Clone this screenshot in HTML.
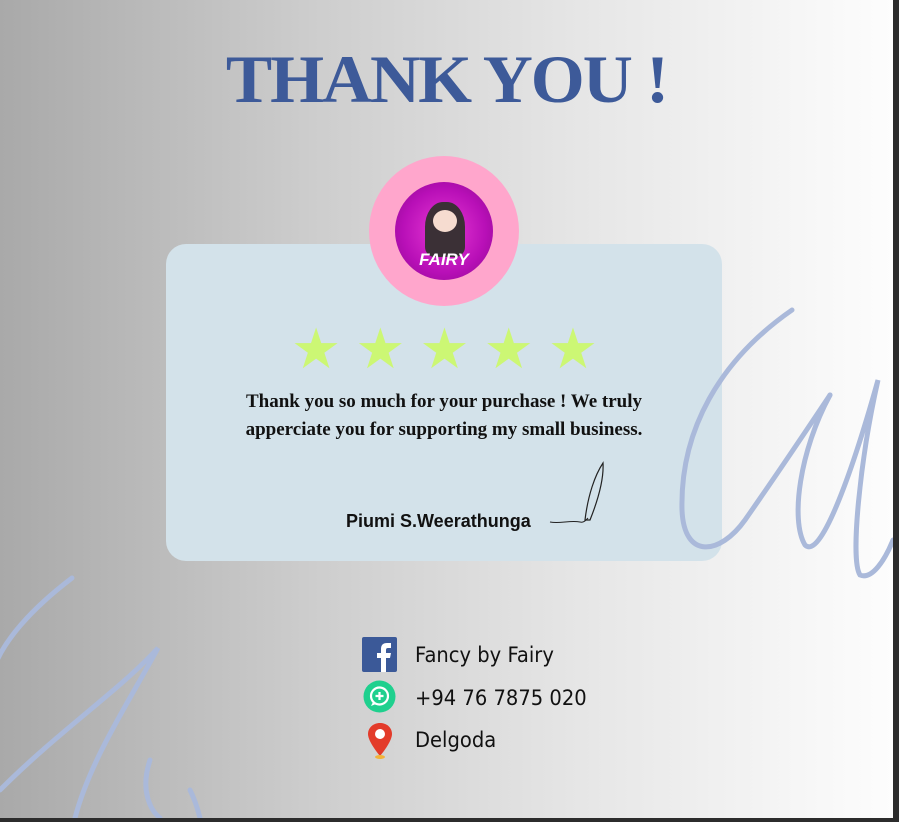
<!DOCTYPE html>
<html><head><meta charset="utf-8"><style>
body{margin:0;width:899px;height:822px;background:#2c2c2c;overflow:hidden;position:relative;font-family:"Liberation Serif",serif}
#pg{position:absolute;left:0;top:0;width:893px;height:818px;background:linear-gradient(90deg,#a9a9a9 0%,#cdcdcd 35%,#e6e6e6 65%,#fdfdfd 100%);overflow:hidden}
h1{position:absolute;left:0;width:893px;top:40px;margin:0;text-align:center;font:bold 68px "Liberation Serif",serif;color:#3d5a99;letter-spacing:-2px;transform:scaleX(1.02)}
.card{position:absolute;left:166px;top:244px;width:556px;height:317px;background:#d3e2ea;border-radius:20px}
.logo{position:absolute;left:369px;top:156px;width:150px;height:150px;border-radius:50%;background:#ffa6cc}
.inner{position:absolute;left:26px;top:26px;width:98px;height:98px;border-radius:50%;background:radial-gradient(circle,#e93ad6 0%,#b80fb7 60%,#8a0a8c 100%);overflow:hidden}
.stars{position:absolute;left:291px;top:322px;font-size:56px;color:#ccf774;letter-spacing:14px;line-height:1}
.msg{position:absolute;left:166px;width:556px;top:388px;text-align:center;font:bold 19px/28px "Liberation Serif",serif;color:#111}
.sig{position:absolute;left:346px;top:511px;font:bold 18px "Liberation Sans",sans-serif;color:#111}
.row{position:absolute;left:415px;font:21px "DejaVu Sans",sans-serif;color:#111;transform-origin:left;transform:scaleX(.93)}
</style></head><body><div id="pg">
<h1>THANK YOU !</h1>
<div class="card"></div>
<svg style="position:absolute;left:0;top:0" width="893" height="818">
<g fill="none" stroke="#aab9da" stroke-width="5" stroke-linecap="round">
<path d="M792 310 C720 360 680 430 682 510 C684 560 720 555 745 520 C780 470 820 410 830 395"/>
<path d="M830 395 C800 450 790 520 805 545 C820 560 850 480 878 380 C860 460 850 560 860 575 C872 580 885 560 893 540"/>
<path d="M72 578 C30 610 5 640 -5 665"/>
<path d="M0 790 C60 730 120 690 158 648 C130 700 90 760 75 818"/>
<path d="M150 760 C140 790 150 810 160 818 M190 790 C195 800 198 810 200 818"/>
</g>
<path d="M603 463 C595 475 588 495 585 520 L590 520 C598 500 604 480 603 463Z" fill="none" stroke="#222" stroke-width="1.2"/>
<path d="M550 522 C560 524 570 520 580 522 C584 523 586 520 588 518" fill="none" stroke="#222" stroke-width="1"/>
</svg>
<div class="logo"><div class="inner">
<div style="position:absolute;left:30px;top:20px;width:40px;height:55px;background:#3b3036;border-radius:45% 45% 10px 10px"></div>
<div style="position:absolute;left:38px;top:28px;width:24px;height:22px;background:#f6dcd0;border-radius:50%"></div>
<div style="position:absolute;left:0;width:98px;top:68px;text-align:center;color:#fff;font:italic bold 17px 'Liberation Sans',sans-serif">FAIRY</div>
</div></div>
<div class="stars">★★★★★</div>
<div class="msg">Thank you so much for your purchase ! We truly<br>apperciate you for supporting my small business.</div>
<div class="sig">Piumi S.Weerathunga</div>
<svg style="position:absolute;left:362px;top:637px" width="35" height="35"><rect width="35" height="35" rx="2" fill="#3b5998"/><path d="M19 35V21h-4v-5h4v-4c0-4 2-6 6-6h4v5h-3c-1.5 0-2 .7-2 2v3h5l-1 5h-4v14z" fill="#fff"/></svg>
<svg style="position:absolute;left:363px;top:680px" width="33" height="33"><circle cx="16.5" cy="16.5" r="16" fill="#1fd08e"/><circle cx="16.5" cy="16" r="8.5" fill="none" stroke="#fff" stroke-width="2.2"/><path d="M10 22l-2 4 5-2" fill="#fff"/><path d="M16.5 12v8M12.5 16h8" stroke="#fff" stroke-width="2.2"/></svg>
<svg style="position:absolute;left:367px;top:722px" width="26" height="38"><path d="M13 1C6 1 1 6 1 12c0 8 12 22 12 22s12-14 12-22C25 6 20 1 13 1z" fill="#e33b2a"/><circle cx="13" cy="12" r="5" fill="#fff"/><ellipse cx="13" cy="35" rx="5" ry="2" fill="#f2b33a"/></svg>
<div class="row" style="top:643px">Fancy by Fairy</div>
<div class="row" style="top:686px">+94 76 7875 020</div>
<div class="row" style="top:728px">Delgoda</div>
</div></body></html>
